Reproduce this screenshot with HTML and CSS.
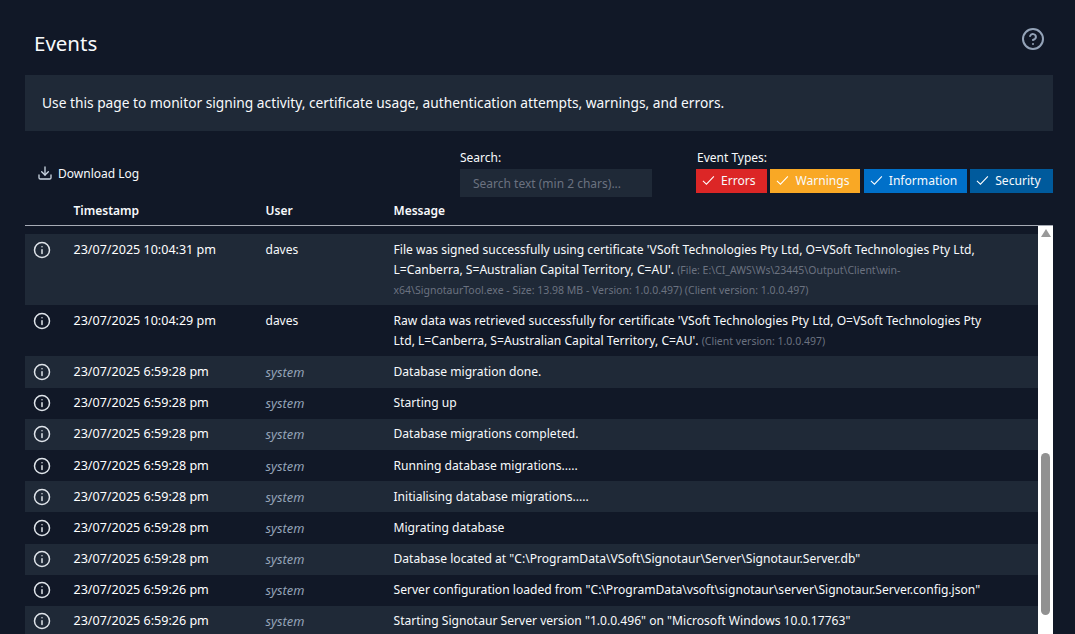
FILE: index.html
```html
<!DOCTYPE html>
<html lang="en">
<head>
<meta charset="utf-8">
<title>Events</title>
<link rel="stylesheet" href="styles.css">
</head>
<body>
<main class="page">
  <header class="head">
    <h1>Events</h1>
    <svg class="help" viewBox="0 0 24 24" width="24" height="24" fill="none" stroke="#94a3b8" stroke-width="2" stroke-linecap="round"><circle cx="12" cy="12" r="10"/><path d="M9.1 9a3 3 0 0 1 5.8 1c0 2-3 3-3 3"/><path d="M12 17h.01"/></svg>
  </header>
  <p class="intro">Use this page to monitor signing activity, certificate usage, authentication attempts, warnings, and errors.</p>
  <div class="tools">
    <a class="download"><svg viewBox="0 0 24 24" width="16" height="16" fill="none" stroke="#cbd5e1" stroke-width="2" stroke-linecap="round" stroke-linejoin="round"><path d="M21 15v4a2 2 0 0 1-2 2H5a2 2 0 0 1-2-2v-4"/><path d="M7 10l5 5 5-5"/><path d="M12 15V3"/></svg>Download Log</a>
    <div class="search">
      <label>Search:</label>
      <input type="text" placeholder="Search text (min 2 chars)...">
    </div>
    <div class="types">
      <label>Event Types:</label>
      <div class="chips">
        <span class="chip err"><svg class="tick" viewBox="0 0 14 14"><path d="M1 7.5l3.8 3.5 8-8.5"/></svg>Errors</span>
        <span class="chip warn"><svg class="tick" viewBox="0 0 14 14"><path d="M1 7.5l3.8 3.5 8-8.5"/></svg>Warnings</span>
        <span class="chip info"><svg class="tick" viewBox="0 0 14 14"><path d="M1 7.5l3.8 3.5 8-8.5"/></svg>Information</span>
        <span class="chip sec"><svg class="tick" viewBox="0 0 14 14"><path d="M1 7.5l3.8 3.5 8-8.5"/></svg>Security</span>
      </div>
    </div>
  </div>
  <div class="row thead">
    <span></span><span>Timestamp</span><span>User</span><span>Message</span>
  </div>
  <div class="table">
    <div class="rows">
      <div class="row alt"><svg class="ic" viewBox="0 0 24 24"><circle cx="12" cy="12" r="10"/><path d="M12 16.5v-5"/><path d="M12 7.5h.01"/></svg><span class="ts">23/07/2025 10:04:31 pm</span><span class="us">daves</span><span class="msg">File was signed successfully using certificate 'VSoft Technologies Pty Ltd, O=VSoft Technologies Pty Ltd, L=Canberra, S=Australian Capital Territory, C=AU'. <small>(File: E:\CI_AWS\Ws\23445\Output\Client\win-x64\SignotaurTool.exe - Size: 13.98 MB - Version: 1.0.0.497) (Client version: 1.0.0.497)</small></span></div>
      <div class="row"><svg class="ic" viewBox="0 0 24 24"><circle cx="12" cy="12" r="10"/><path d="M12 16.5v-5"/><path d="M12 7.5h.01"/></svg><span class="ts">23/07/2025 10:04:29 pm</span><span class="us">daves</span><span class="msg">Raw data was retrieved successfully for certificate 'VSoft Technologies Pty Ltd, O=VSoft Technologies Pty Ltd, L=Canberra, S=Australian Capital Territory, C=AU'. <small>(Client version: 1.0.0.497)</small></span></div>
      <div class="row alt"><svg class="ic" viewBox="0 0 24 24"><circle cx="12" cy="12" r="10"/><path d="M12 16.5v-5"/><path d="M12 7.5h.01"/></svg><span class="ts">23/07/2025 6:59:28 pm</span><span class="us sys">system</span><span class="msg">Database migration done.</span></div>
      <div class="row"><svg class="ic" viewBox="0 0 24 24"><circle cx="12" cy="12" r="10"/><path d="M12 16.5v-5"/><path d="M12 7.5h.01"/></svg><span class="ts">23/07/2025 6:59:28 pm</span><span class="us sys">system</span><span class="msg">Starting up</span></div>
      <div class="row alt"><svg class="ic" viewBox="0 0 24 24"><circle cx="12" cy="12" r="10"/><path d="M12 16.5v-5"/><path d="M12 7.5h.01"/></svg><span class="ts">23/07/2025 6:59:28 pm</span><span class="us sys">system</span><span class="msg">Database migrations completed.</span></div>
      <div class="row"><svg class="ic" viewBox="0 0 24 24"><circle cx="12" cy="12" r="10"/><path d="M12 16.5v-5"/><path d="M12 7.5h.01"/></svg><span class="ts">23/07/2025 6:59:28 pm</span><span class="us sys">system</span><span class="msg">Running database migrations.....</span></div>
      <div class="row alt"><svg class="ic" viewBox="0 0 24 24"><circle cx="12" cy="12" r="10"/><path d="M12 16.5v-5"/><path d="M12 7.5h.01"/></svg><span class="ts">23/07/2025 6:59:28 pm</span><span class="us sys">system</span><span class="msg">Initialising database migrations.....</span></div>
      <div class="row"><svg class="ic" viewBox="0 0 24 24"><circle cx="12" cy="12" r="10"/><path d="M12 16.5v-5"/><path d="M12 7.5h.01"/></svg><span class="ts">23/07/2025 6:59:28 pm</span><span class="us sys">system</span><span class="msg">Migrating database</span></div>
      <div class="row alt"><svg class="ic" viewBox="0 0 24 24"><circle cx="12" cy="12" r="10"/><path d="M12 16.5v-5"/><path d="M12 7.5h.01"/></svg><span class="ts">23/07/2025 6:59:28 pm</span><span class="us sys">system</span><span class="msg">Database located at "C:\ProgramData\VSoft\Signotaur\Server\Signotaur.Server.db"</span></div>
      <div class="row"><svg class="ic" viewBox="0 0 24 24"><circle cx="12" cy="12" r="10"/><path d="M12 16.5v-5"/><path d="M12 7.5h.01"/></svg><span class="ts">23/07/2025 6:59:26 pm</span><span class="us sys">system</span><span class="msg">Server configuration loaded from "C:\ProgramData\vsoft\signotaur\server\Signotaur.Server.config.json"</span></div>
      <div class="row alt"><svg class="ic" viewBox="0 0 24 24"><circle cx="12" cy="12" r="10"/><path d="M12 16.5v-5"/><path d="M12 7.5h.01"/></svg><span class="ts">23/07/2025 6:59:26 pm</span><span class="us sys">system</span><span class="msg">Starting Signotaur Server version "1.0.0.496" on "Microsoft Windows 10.0.17763"</span></div>
    </div>
    <div class="scroll"><svg class="arrow" viewBox="0 0 12 10" width="12" height="10"><path d="M6 1l5 8H1z"/></svg><div class="thumb"></div></div>
  </div>
</main>
</body>
</html>
```

FILE: styles.css
```css
* { box-sizing: border-box; }
html, body { margin: 0; height: 100%; }
body {
  background: #111827;
  color: #f8fafc;
  font-family: "Noto Sans", "Open Sans", sans-serif;
  font-size: 12px;
  overflow: hidden;
}
.page { padding: 0 22px 0 25px; height: 634px; overflow: hidden; }
.head { display: flex; justify-content: space-between; align-items: flex-start; height: 75px; padding: 27px 8px 0 9px; }
h1 { margin: 0; font-size: 20.5px; line-height: 33px; font-weight: 400; }
.intro { margin: 0; height: 56px; background: #1f2937; padding: 0 17px; line-height: 56px; font-size: 13.75px; }
.tools { display: flex; height: 65px; }
.download { display: flex; align-items: center; gap: 5px; width: 435px; height: 84px; padding: 0 0 0 12px; font-size: 12px; }
.search { width: 236px; padding-top: 18.5px; }
.search label, .types label { display: block; line-height: 16px; font-size: 12px; }
.types label { padding-left: 1px; }
.search input { display: block; width: 192px; height: 28px; margin-top: 3.5px; background: #1f2937; border: 0; padding: 0 13px; font: inherit; color: #f8fafc; }
.search input::placeholder { color: #6b7280; opacity: 1; }
.types { flex: 1; padding-top: 18.5px; }
.chips { display: flex; gap: 3.4px; margin-top: 3.5px; }
.chip { display: flex; align-items: center; height: 24px; padding: 0 6px 2px; gap: 6px; white-space: nowrap; font-size: 12.1px; }
.tick { width: 13px; height: 13px; fill: none; stroke: #fff; stroke-width: 1.1; }
.err { background: #dc2626; width: 71px; }
.warn { background: #f9a825; width: 90px; }
.info { background: #0070c9; width: 103px; }
.sec { background: #005a9c; flex: 1; }
.row { display: grid; grid-template-columns: 48.5px 192px 128px 1fr; }
.thead { height: 30px; align-items: center; font-weight: 600; border-bottom: 1px solid #a6abb5; padding-bottom: 1px; }
.table { display: flex; height: 408px; }
.rows { flex: 1; padding-top: 8px; min-width: 0; }
.rows .row { padding: 5.6px 0; line-height: 20px; align-items: start; }
.alt { background: #1f2937; }
.ic { width: 18px; height: 18px; margin: 1px 0 0 7.5px; fill: none; stroke: #dfe4ea; stroke-width: 2; stroke-linecap: round; }
.ts { font-size: 12.55px; font-weight: 400; color: #fff; }
.sys { font-style: italic; color: #94a3b8; font-size: 12.8px; }
.msg { padding-right: 40px; font-size: 12.1px; }
small { font-size: 10.5px; color: #6b7280; }
.scroll { width: 15px; background: #fff; position: relative; padding: 2px 1.5px; }
.arrow { display: block; fill: #999; }
.thumb { position: absolute; left: 3px; right: 3px; top: 227px; height: 162px; border-radius: 5px; background: #919191; }
```
